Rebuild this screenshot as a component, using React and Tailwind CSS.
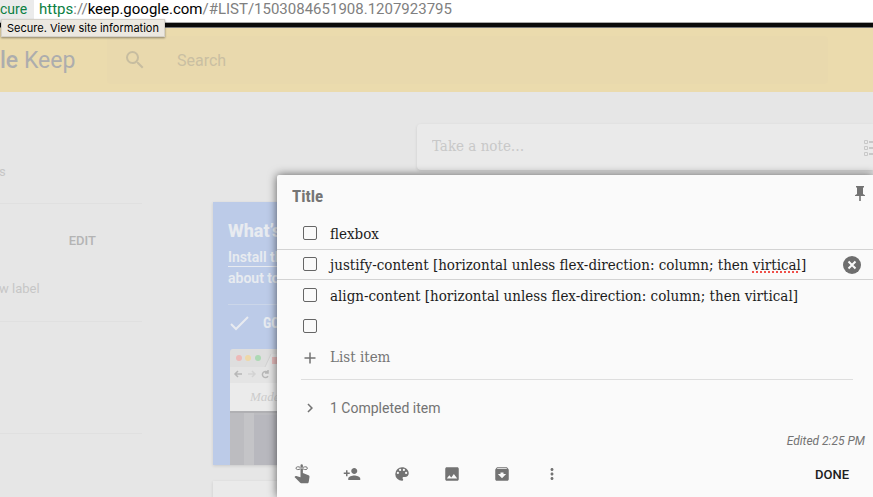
import React from 'react';

const SLAB = "font-['Roboto_Slab','DejaVu_Serif_Condensed','DejaVu_Serif',serif]";

function Icon({ size = 'size-[18px]', children }) {
  return (
    <svg viewBox="0 0 24 24" className={`${size} block shrink-0`} fill="currentColor" aria-hidden="true">
      {children}
    </svg>
  );
}

function ToolButton({ label, children }) {
  return (
    <button type="button" aria-label={label} className="flex h-8 w-[50px] items-center justify-center">
      {children}
    </button>
  );
}

function AddressBar() {
  return (
    <div className="relative z-30">
      <div className="flex h-[22px] items-start overflow-hidden bg-white font-['Roboto',sans-serif] text-[15px] leading-[18px]">
        <button type="button" className="flex h-full w-[34px] shrink-0 items-start bg-[#ebebeb] text-[14px] leading-[18px] text-[#0b8043]">
          cure
        </button>
        <p className="pl-[5px] whitespace-nowrap text-[#808080]">
          <span className="text-[#0b8043]">https</span>://<span className="text-black">keep.google.com</span>
          /#LIST/1503084651908.1207923795
        </p>
      </div>
      <div className="h-[6px] border-t border-b border-t-[#aaa] border-b-[#777] bg-[#0a0a0a]" />
      <div
        role="tooltip"
        className="absolute top-[19px] left-px border border-[#d5d1c9] bg-[#ece8e0] px-[5px] font-['Inter',sans-serif] text-[11px] leading-4 whitespace-nowrap text-black shadow-[0_1px_2px_rgba(0,0,0,0.4)]"
      >
        Secure. View site information
      </div>
    </div>
  );
}

function Header() {
  return (
    <header className="flex h-16 items-center bg-[#ebdbad] font-['Roboto',sans-serif]">
      <div className="w-[107px] shrink-0 pt-0.5 text-[23px] leading-8 whitespace-nowrap text-[#adadad]">
        <span className="font-medium">le</span> Keep
      </div>
      <label className="mr-[45px] flex h-12 grow items-center rounded bg-[#e9d9ad] pl-4 text-[#c7bda0]">
        <Icon size="size-6">
          <path d="M15.5 14h-.79l-.28-.27A6.471 6.471 0 0 0 16 9.5 6.5 6.5 0 1 0 9.5 16c1.61 0 3.09-.59 4.23-1.57l.27.28v.79l5 4.99L20.49 19l-4.99-5zm-6 0C7.01 14 5 11.99 5 9.5S7.01 5 9.5 5 14 7.01 14 9.5 11.99 14 9.5 14z" />
        </Icon>
        <input
          type="text"
          aria-label="Search"
          placeholder="Search"
          className="ml-[30px] min-w-0 grow bg-transparent pt-0.5 text-base outline-none placeholder:text-[#c9bfa2]"
        />
      </label>
    </header>
  );
}

function Sidebar() {
  return (
    <nav className="w-[213px] shrink-0 font-['Roboto',sans-serif] text-[13px] leading-5 text-[#c6c6c6]">
      <div className="w-[142px]">
        <div className="h-[112px] border-b border-[#e0e0e0] pt-[70px]">
          <a href="#reminders" className="-ml-px block">s</a>
        </div>
        <div className="h-[118px] border-b border-[#e0e0e0] pt-[27px]">
          <div className="flex justify-end pr-[46px]">
            <button type="button" className="font-medium text-[#b4b4b4]">EDIT</button>
          </div>
          <a href="#label" className="mt-7 -ml-px block">w label</a>
        </div>
        <div className="h-[112px] border-b border-[#e0e0e0]" />
      </div>
    </nav>
  );
}

function BrowserPicture() {
  return (
    <svg viewBox="0 0 210 116" className="ml-[2px] mt-[14px] block h-[116px] w-[210px]" role="img" aria-label="Browser window">
      <path d="M0 3a3 3 0 0 1 3-3h207v116H0z" fill="#dedede" />
      <path d="M0 18h35l6-13h70v13h99v16H0z" fill="#e4e4e4" />
      <circle cx="9" cy="9" r="3" fill="#edb9b8" />
      <circle cx="18" cy="9" r="3" fill="#eed8a8" />
      <circle cx="28" cy="9" r="3" fill="#add9b4" />
      <path d="M42 8h6v7h-6z" fill="#e6bcbc" />
      <path d="M35 18l6-13" stroke="#d2d2d2" fill="none" />
      <path d="M12 25H5m3-3-3 3 3 3" stroke="#b7b7b7" strokeWidth="1.5" fill="none" />
      <path d="M18 25h7m-3-3 3 3-3 3" stroke="#d3d3d3" strokeWidth="1.5" fill="none" />
      <path d="M38 24a3 3 0 1 0 0 3m0-6v3h-3" stroke="#b7b7b7" strokeWidth="1.5" fill="none" />
      <path d="M0 34h210v28H0z" fill="#ebebeb" />
      <text x="20" y="52" fontSize="13" fontStyle="italic" fontFamily="Liberation Serif, serif" fill="#cbcbcb">Made</text>
      <path d="M0 62h210v54H0z" fill="#bcbcc0" />
      <path d="M14 62h10v54H14z" fill="#c4c4c7" />
      <path d="M24 66h186v50H24z" fill="#b8b8be" />
      <path d="M0 62h210v2H0z" fill="#b0b0b3" />
    </svg>
  );
}

function Board() {
  return (
    <main className="min-w-0 grow pt-8 font-['Roboto',sans-serif]">
      <div className="ml-[204px] flex h-[46px] items-center overflow-hidden rounded-l-sm bg-[#eaeaea] pl-[15px] shadow-[0_1px_3px_rgba(0,0,0,0.12)]">
        <input
          type="text"
          aria-label="Take a note"
          placeholder="Take a note…"
          className={`${SLAB} min-w-0 grow bg-transparent pb-0.5 text-[15px] outline-none placeholder:text-[#c8c8c8]`}
        />
        <button type="button" aria-label="New list" className="h-[18px] w-[9px] shrink-0 overflow-hidden text-[#c8c8c8]">
          <svg viewBox="0 0 18 18" className="block size-[18px]" fill="none" stroke="currentColor" aria-hidden="true">
            <path d="M.5 2.5h3v3h-3zM.5 8.5h3v3h-3zM.5 14.5h3v3h-3z" />
            <path d="M5 4h13M5 10h13M5 16h13" strokeWidth="2" />
          </svg>
        </button>
      </div>

      <article className="mt-8 h-[263px] w-60 overflow-hidden bg-[#bccbe8] px-[15px] pt-[17px] text-[#e8ebf0] shadow-[0_1px_3px_rgba(0,0,0,0.12)]">
        <h2 className="text-[18px] leading-6 font-extrabold whitespace-nowrap">What’s new</h2>
        <p className="mt-1 text-[14px] leading-[21px] font-semibold whitespace-nowrap">
          <a href="#install" className="underline underline-offset-4">Install the app</a>
          <br />
          about to
        </p>
        <div className="mt-[15px] flex items-center border-t border-[#cbd6e9] pt-[6px]">
          <svg viewBox="0 0 24 24" className="size-6" fill="none" stroke="currentColor" strokeWidth="2" aria-hidden="true">
            <path d="M3 13l5 5L20 6" />
          </svg>
          <span className="ml-[11px] font-['Roboto_Condensed','Roboto',sans-serif] text-[14px] leading-6 font-bold">GO</span>
        </div>
        <BrowserPicture />
      </article>
      <article className="mt-4 h-20 w-60 bg-[#eaeaea] shadow-[0_1px_3px_rgba(0,0,0,0.12)]" />
    </main>
  );
}

function ListRow({ id, focused, children }) {
  return (
    <li
      className={
        focused
          ? 'flex h-[31px] items-center border-y border-[#d3d3d3] pl-[26px] pr-3'
          : 'flex h-[31px] items-center pl-[26px] pr-3'
      }
    >
      <input
        id={id}
        type="checkbox"
        aria-label={children ? undefined : 'Empty item'}
        className="mb-0.5 size-[14px] shrink-0 appearance-none rounded-xs border border-[#666] bg-transparent"
      />
      {children && (
        <label htmlFor={id} className={`${SLAB} ml-[13px] grow text-[15px] leading-5 whitespace-nowrap text-[#1c1c1c]`}>
          {children}
        </label>
      )}
      {focused && (
        <button type="button" aria-label="Delete item" className="text-[#6e6e6e]">
          <svg viewBox="0 0 18 18" className="block size-[18px]" aria-hidden="true">
            <circle cx="9" cy="9" r="9" fill="currentColor" />
            <path d="M5.5 5.5l7 7m0-7l-7 7" stroke="#fafafa" strokeWidth="2" />
          </svg>
        </button>
      )}
    </li>
  );
}

function NoteDialog() {
  return (
    <section
      role="dialog"
      aria-label="Edit note"
      className="absolute top-[175px] right-0 bottom-0 left-[277px] z-20 rounded-tl-xs bg-[#fafafa] font-['Roboto',sans-serif] text-[#737373] shadow-[0_0_10px_rgba(0,0,0,0.6)]"
    >
      <div className="flex h-[43px] items-center pr-2 pl-[15px]">
        <input
          type="text"
          aria-label="Title"
          placeholder="Title"
          className="min-w-0 grow bg-transparent font-['Roboto_Condensed','Roboto',sans-serif] text-[17px] font-bold outline-none placeholder:text-[#757575]"
        />
        <button type="button" aria-label="Pin note" className="mb-1.5">
          <svg viewBox="0 0 10 15" className="block h-[15px] w-[10px]" fill="currentColor" aria-hidden="true">
            <path d="M1 0h8v1.5H8V8l2 1.2V10H5.8v5H4.2v-5H0v-.8L2 8V1.5H1z" />
          </svg>
        </button>
      </div>

      <ul>
        <ListRow id="item-1">flexbox</ListRow>
        <ListRow id="item-2" focused>
          justify-content [horizontal unless flex-direction: column; then{' '}
          <span className="underline decoration-[#f0504a] decoration-dotted decoration-2 underline-offset-2">virtical</span>]
        </ListRow>
        <ListRow id="item-3">align-content [horizontal unless flex-direction: column; then virtical]</ListRow>
        <ListRow id="item-4" />
      </ul>

      <div className="mr-5 ml-6 flex h-[38px] items-center border-b border-[#dedede] pb-1.5">
        <label htmlFor="new-item" className="flex w-[29px] shrink-0 pl-[2px]">
          <svg viewBox="0 0 14 14" className="size-[14px]" fill="none" stroke="currentColor" aria-label="Add" role="img">
            <path d="M7 1.5v11M1.5 7h11" strokeWidth="1.5" />
          </svg>
        </label>
        <input
          id="new-item"
          type="text"
          placeholder="List item"
          className={`${SLAB} min-w-0 grow bg-transparent text-[15px] outline-none placeholder:text-[#757575]`}
        />
      </div>

      <button type="button" className="mt-[18px] ml-6 flex h-5 items-center text-[14px] leading-5">
        <span className="w-[29px]">
          <Icon>
            <path d="M10 6L8.59 7.41 13.17 12l-4.58 4.59L10 18l6-6z" />
          </Icon>
        </span>
        1 Completed item
      </button>

      <p className="mt-[13px] pr-2 text-right text-[12px] leading-5 italic">Edited 2:25 PM</p>

      <div className="mt-[7px] flex items-center justify-between">
        <div className="flex">
          <ToolButton label="Remind me">
            <svg viewBox="0 0 18 20" className="size-5" fill="currentColor" aria-hidden="true">
              <path d="M7.5 1.5a1.2 1.2 0 0 1 2.4 0V9l5.6 2.2c.8.3 1.1 1 1 1.7l-.8 5c-.1.8-.7 1.3-1.4 1.3H8.2c-.4 0-.8-.2-1-.5L1.5 13l.8-.8c.3-.3.7-.3 1-.2l4.2 1.3z" />
              <path d="M7.5 4.8C5.5 6 3 5.8 3 4.2S5.5 2.3 7.5 3.5m2.4 1.3c2 1.2 4.5 1 4.5-.6s-2.5-1.9-4.5-.7" fill="none" stroke="currentColor" />
              <path d="M7 3.5h3.4v1.2H7z" fill="#bdbdbd" />
            </svg>
          </ToolButton>
          <ToolButton label="Collaborator">
            <Icon>
              <path d="M15 12c2.21 0 4-1.79 4-4s-1.79-4-4-4-4 1.79-4 4 1.79 4 4 4zm-9-2V7H4v3H1v2h3v3h2v-3h3v-2H6zm9 4c-2.67 0-8 1.34-8 4v2h16v-2c0-2.66-5.33-4-8-4z" />
            </Icon>
          </ToolButton>
          <ToolButton label="Change color">
            <Icon>
              <path d="M12 3a9 9 0 0 0 0 18c.83 0 1.5-.67 1.5-1.5 0-.39-.15-.74-.39-1.01-.23-.26-.38-.61-.38-.99 0-.83.67-1.5 1.5-1.5H16c2.76 0 5-2.24 5-5 0-4.42-4.03-8-9-8zm-5.5 9a1.5 1.5 0 1 1 0-3 1.5 1.5 0 0 1 0 3zm3-4a1.5 1.5 0 1 1 0-3 1.5 1.5 0 0 1 0 3zm5 0a1.5 1.5 0 1 1 0-3 1.5 1.5 0 0 1 0 3zm3 4a1.5 1.5 0 1 1 0-3 1.5 1.5 0 0 1 0 3z" />
            </Icon>
          </ToolButton>
          <ToolButton label="Add image">
            <Icon>
              <path d="M21 19V5c0-1.1-.9-2-2-2H5c-1.1 0-2 .9-2 2v14c0 1.1.9 2 2 2h14c1.1 0 2-.9 2-2zM8.5 13.5l2.5 3.01L14.5 12l4.5 6H5l3.5-4.5z" />
            </Icon>
          </ToolButton>
          <ToolButton label="Archive">
            <Icon>
              <path d="M20.54 5.23l-1.39-1.68C18.88 3.21 18.47 3 18 3H6c-.47 0-.88.21-1.16.55L3.46 5.23C3.17 5.57 3 6.02 3 6.5V19c0 1.1.9 2 2 2h14c1.1 0 2-.9 2-2V6.5c0-.48-.17-.93-.46-1.27zM12 17.5L6.5 12H10v-2h4v2h3.5L12 17.5zM5.12 5l.81-1h12l.94 1H5.12z" />
            </Icon>
          </ToolButton>
          <ToolButton label="More">
            <Icon>
              <path d="M12 8c1.1 0 2-.9 2-2s-.9-2-2-2-2 .9-2 2 .9 2 2 2zm0 2c-1.1 0-2 .9-2 2s.9 2 2 2 2-.9 2-2-.9-2-2-2zm0 6c-1.1 0-2 .9-2 2s.9 2 2 2 2-.9 2-2-.9-2-2-2z" />
            </Icon>
          </ToolButton>
        </div>
        <button type="button" className="mt-0.5 mr-6 text-[13px] leading-5 font-medium text-[#202020]">DONE</button>
      </div>
    </section>
  );
}

export default function App() {
  return (
    <div className="relative h-screen overflow-hidden bg-[#e6e6e6]">
      <AddressBar />
      <Header />
      <div className="flex">
        <Sidebar />
        <Board />
      </div>
      <NoteDialog />
    </div>
  );
}
